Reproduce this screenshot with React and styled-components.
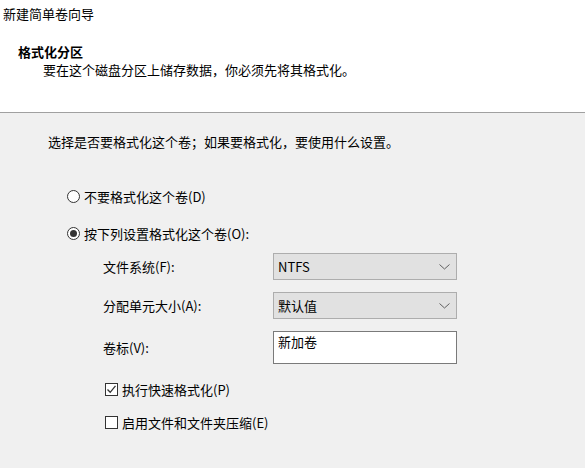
import React from "react";
import styled, { createGlobalStyle } from "styled-components";

const GlobalStyle = createGlobalStyle`
  html, body {
    margin: 0;
    padding: 0;
    background: #f0f0f0;
  }
  body {
    font-family: "Noto Sans CJK SC", "Noto Sans", sans-serif;
    font-size: 13px;
    color: #000;
  }
`;

const Page = styled.div`
  width: 585px;
  height: 468px;
  display: flex;
  flex-direction: column;
  overflow: hidden;
`;

const Header = styled.div`
  height: 113px;
  background: #fff;
  border-bottom: 1px solid #a0a0a0;
  padding: 5px 0 0 3px;
  box-sizing: border-box;
  flex-shrink: 0;
`;

const WindowTitle = styled.div`
  line-height: 17px;
`;

const StepTitle = styled.div`
  margin: 21px 0 0 15px;
  line-height: 17px;
  font-weight: 700;
`;

const StepSub = styled.div`
  margin: 1px 0 0 40px;
  line-height: 17px;
`;

const Body = styled.div`
  flex: 1;
  background: #f0f0f0;
  padding: 20px 0 0 48px;
`;

const Prompt = styled.div`
  line-height: 17px;
`;

const Options = styled.div`
  margin: 38px 0 0 19px;
  display: flex;
  flex-direction: column;
  gap: 20px;
`;

const ChoiceRow = styled.label`
  display: flex;
  align-items: center;
  gap: 4px;
  line-height: 17px;
  height: 17px;
`;

const RadioMark = styled.span`
  width: 13px;
  height: 13px;
  box-sizing: border-box;
  border: 1px solid #333;
  border-radius: 50%;
  background: #fff;
  display: flex;
  align-items: center;
  justify-content: center;
  &::after {
    content: "";
    width: 7px;
    height: 7px;
    border-radius: 50%;
    background: ${(p) => (p.checked ? "#333" : "transparent")};
  }
`;

const Form = styled.div`
  margin: 11px 0 0 55px;
  display: grid;
  grid-template-columns: 170px 184px;
  grid-auto-rows: auto;
  row-gap: 12px;
  align-items: center;
`;

const FieldLabel = styled.div`
  line-height: 17px;
`;

const Select = styled.div`
  height: 27px;
  box-sizing: border-box;
  border: 1px solid #adadad;
  background: #e1e1e1;
  display: flex;
  align-items: center;
  justify-content: space-between;
  padding: 0 6px 0 4px;
`;

const TextBox = styled.div`
  height: 33px;
  box-sizing: border-box;
  border: 1px solid #7a7a7a;
  background: #fff;
  padding: 1px 4px;
  line-height: 17px;
`;

const Checks = styled.div`
  margin: 17px 0 0 57px;
  display: flex;
  flex-direction: column;
  gap: 16px;
`;

const CheckMark = styled.span`
  width: 13px;
  height: 13px;
  box-sizing: border-box;
  border: 1px solid #333;
  background: #fff;
  display: flex;
  align-items: center;
  justify-content: center;
`;

const Chevron = () => (
  <svg width="11" height="6" viewBox="0 0 11 6">
    <path d="M0.5 0.5 L5.5 5 L10.5 0.5" fill="none" stroke="#606060" strokeWidth="1" />
  </svg>
);

const Tick = () => (
  <svg width="11" height="11" viewBox="0 0 11 11">
    <path d="M1.5 5.5 L4.2 8.3 L9.5 1.8" fill="none" stroke="#333" strokeWidth="1.3" />
  </svg>
);

const Radio = ({ checked, children }) => (
  <ChoiceRow>
    <RadioMark checked={checked} />
    {children}
  </ChoiceRow>
);

const Check = ({ checked, children }) => (
  <ChoiceRow>
    <CheckMark>{checked && <Tick />}</CheckMark>
    {children}
  </ChoiceRow>
);

export default function App() {
  return (
    <Page>
      <GlobalStyle />
      <Header>
        <WindowTitle>新建简单卷向导</WindowTitle>
        <StepTitle>格式化分区</StepTitle>
        <StepSub>要在这个磁盘分区上储存数据，你必须先将其格式化。</StepSub>
      </Header>
      <Body>
        <Prompt>选择是否要格式化这个卷；如果要格式化，要使用什么设置。</Prompt>
        <Options>
          <Radio>不要格式化这个卷(D)</Radio>
          <Radio checked>按下列设置格式化这个卷(O):</Radio>
        </Options>
        <Form>
          <FieldLabel>文件系统(F):</FieldLabel>
          <Select>
            <span>NTFS</span>
            <Chevron />
          </Select>
          <FieldLabel>分配单元大小(A):</FieldLabel>
          <Select>
            <span>默认值</span>
            <Chevron />
          </Select>
          <FieldLabel>卷标(V):</FieldLabel>
          <TextBox>新加卷</TextBox>
        </Form>
        <Checks>
          <Check checked>执行快速格式化(P)</Check>
          <Check>启用文件和文件夹压缩(E)</Check>
        </Checks>
      </Body>
    </Page>
  );
}
